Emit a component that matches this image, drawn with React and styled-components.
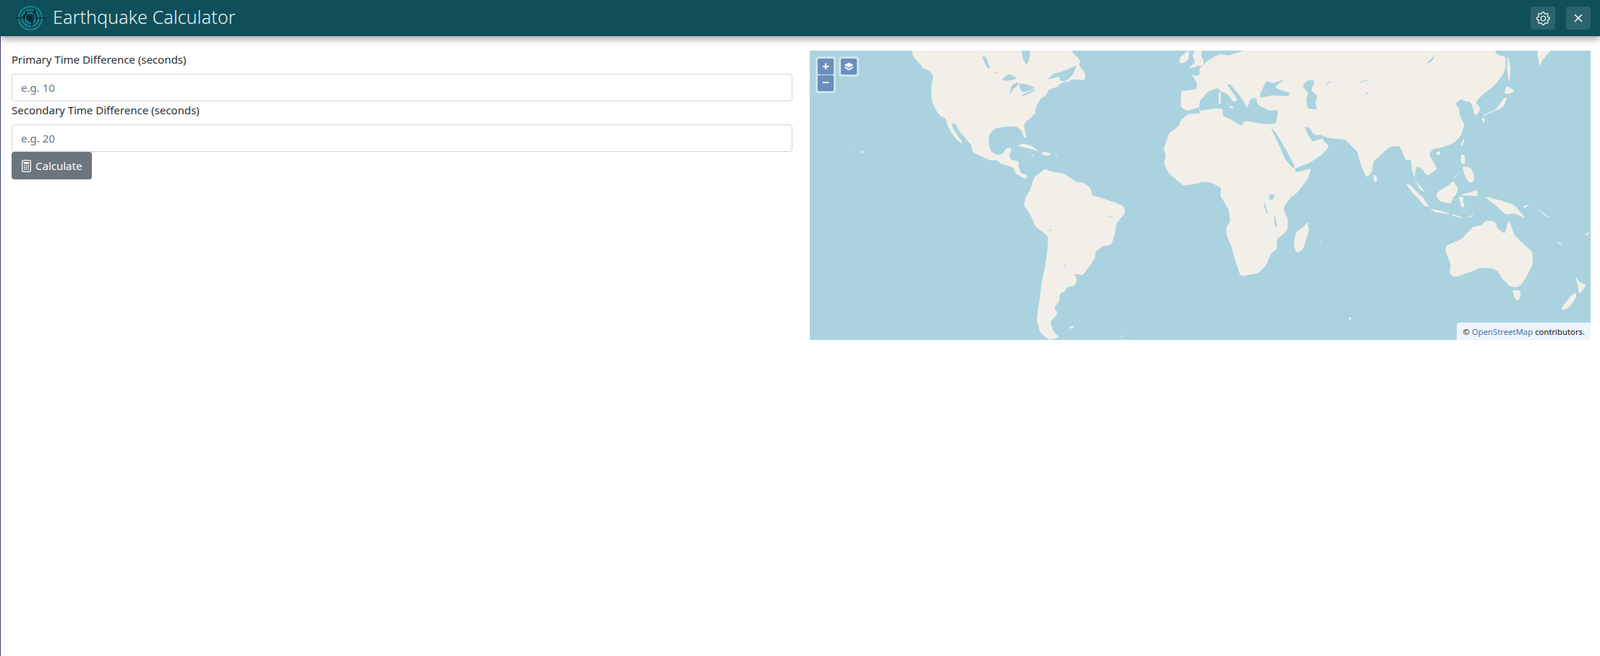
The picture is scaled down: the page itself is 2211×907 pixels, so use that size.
import React from "react";
import styled, { createGlobalStyle } from "styled-components";
import { BsGear } from "react-icons/bs";
import { X } from "lucide-react";

const GlobalStyle = createGlobalStyle`
  html, body {
    margin: 0;
    background: #fff;
  }
  * {
    box-sizing: border-box;
  }
`;

const FONT = `"Noto Sans", "Open Sans", sans-serif`;

// map traced in four 540x200 tiles, points are in tile pixels at 2.9 x 3 zoom
const TILES = [
  {
    x: 0,
    y: 0,
    land: [
      "408,-3 415,25 432,45 447,60 452,72 480,85 497,103 490,130 487,175 490,210 505,245 522,270 545,282 552,310 570,345 595,375 612,388 610,375 585,340 567,305 583,300 600,335 630,370 650,395 652,420 690,440 730,457 745,452 770,470 805,480 820,490 825,510 850,525 868,533 875,517 850,510 838,490 838,458 810,455 800,440 810,402 785,405 775,430 745,432 725,415 717,385 720,345 745,322 790,315 830,315 848,330 860,362 870,362 862,330 860,300 880,285 905,262 905,240 925,200 950,185 955,165 990,150 1040,130 1045,120 1105,122 1105,95 1080,60 1085,40 1060,15 1050,-3",
      "870,603 885,575 900,525 925,505 945,490 960,500 1020,510 1070,545 1100,548 1125,570 1135,603",
      "832,395 855,385 890,395 920,418 885,408 845,397",
      "925,425 945,418 972,432 940,436",
      "887,432 902,433 900,437 888,436",
      "983,432 996,433 995,436 984,436",
      "175,395 182,397 180,400",
      "205,415 216,418 214,426 208,424",
      "1480,52 1487,25 1505,12 1520,-3 1522,30 1505,50",
      "1572,-3 1542,-3 1535,25 1548,45 1520,75 1572,60",
      "1572,100 1545,105 1530,98 1555,135 1550,160 1490,168 1488,235 1515,250 1572,232",
      "1572,262 1520,262 1490,285 1480,312 1440,345 1420,405 1428,440 1420,465 1440,510 1500,560 1572,548"
    ],
    water: [
      "850,-3 885,-3 880,40 870,60 855,35",
      "690,25 705,22 725,75 712,72",
      "768,122 800,95 832,115 800,125",
      "802,186 808,145 835,128 835,145 815,160",
      "835,135 870,140 905,155 870,170 850,170",
      "845,188 900,160 905,165 860,188",
      "952,120 978,95 1010,88 1072,60 1055,98 1035,122 1015,128 1003,122 1000,108 975,115",
      "990,160 1040,125 1005,135",
      "740,90 750,85 748,95"
    ]
  },
  {
    x: 540,
    y: 0,
    land: [
      "-3,72 40,35 75,15 115,20 185,-3 1180,-3 1195,20 1225,25 1225,70 1215,100 1180,145 1130,185 1105,215 1125,240 1115,262 1100,268 1095,240 1085,212 1060,210 1050,198 1022,222 1040,240 1040,265 1060,310 1045,355 1015,385 960,405 935,405 918,430 950,490 910,520 890,490 868,478 858,530 905,590 880,575 850,500 845,450 825,455 800,395 760,400 695,460 690,500 670,527 650,490 630,420 620,408 580,368 510,362 490,350 490,370 518,395 490,430 440,465 378,490 445,490 430,535 400,575 375,603 80,603 85,570 40,545 -3,545",
      "-3,30 12,32 14,60 -3,65",
      "825,550 840,555 885,603 860,603",
      "945,603 955,585 1000,555 1015,540 1035,572 1025,603",
      "1352,-3 1408,-3 1380,30 1360,65",
      "1235,20 1245,70 1240,130 1235,115 1230,60",
      "1228,145 1262,165 1240,180 1220,180",
      "1130,275 1160,260 1215,235 1232,195 1220,195 1185,245 1140,265",
      "1128,280 1143,278 1138,305",
      "1045,392 1055,365 1060,370 1052,397",
      "945,425 960,415 964,430 950,433",
      "693,515 705,515 711,540 698,546",
      "1045,432 1062,432 1062,470 1047,470",
      "1052,480 1085,485 1100,520 1095,548 1075,545 1060,515",
      "1020,525 1040,500 1022,530",
      "1040,600 1090,585 1110,575 1115,603"
    ],
    water: [
      "-3,212 30,170 70,155 85,170 110,180 135,215 150,205 108,140 120,138 165,195 190,240 200,200 225,195 230,225 280,250 312,245 305,303 255,305 180,290 165,312 130,290 90,270 90,240 60,240 -3,250",
      "240,180 265,125 290,135 340,120 310,140 300,155 360,175 355,190 290,185 240,195",
      "410,145 435,120 460,125 445,165 472,190 460,215 470,245 430,240 425,200 435,180",
      "282,318 300,335 330,385 375,470 378,490 365,480 340,450 320,400",
      "378,490 440,468 470,482 445,490 385,505",
      "418,315 440,320 455,350 490,350 490,365 450,378 430,345",
      "905,55 945,15 952,-3 930,45",
      "638,140 645,125 690,123 645,130",
      "505,155 510,130 530,125 512,135",
      "660,175 680,175 670,181"
    ],
    island: [
      "75,172 83,172 82,222 74,222",
      "110,235 130,228 133,240"
    ]
  },
  {
    x: 0,
    y: 200,
    land: [
      "870,-3 862,20 860,45 885,80 905,130 955,168 955,210 945,290 930,360 925,410 915,475 910,520 925,570 960,600 1000,590 975,560 965,525 995,490 980,465 1000,440 1005,405 1025,400 1030,380 1065,375 1072,350 1060,325 1095,332 1125,290 1145,260 1145,235 1175,212 1210,205 1225,160 1230,115 1265,75 1260,45 1220,28 1150,5 1120,-3",
      "1040,545 1062,542 1055,553 1040,553",
      "1240,580 1250,582 1255,592"
    ],
    water: [
      "958,140 968,142 966,150",
      "1016,288 1027,288 1022,294",
      "1198,88 1212,84 1205,92"
    ]
  },
  {
    x: 540,
    y: 200,
    land: [
      "78,-3 115,60 120,110 105,130 105,165 125,210 140,270 160,330 175,335 235,322 265,290 285,240 305,225 310,205 305,185 350,145 352,100 335,60 340,40 372,-3",
      "430,110 437,145 410,230 385,238 375,205 383,155 420,125",
      "860,-3 885,-3 920,50 900,45",
      "945,-3 1020,-3 1005,35 960,25",
      "918,55 970,65 1005,80 945,70",
      "1010,78 1050,90 1048,95 1012,84",
      "1070,95 1100,75 1085,92",
      "1035,5 1060,8 1052,20 1062,48 1048,50 1042,25",
      "1140,5 1200,20 1260,40 1305,95 1260,75 1225,80 1195,50 1165,25",
      "1295,45 1325,38 1300,55",
      "985,210 1050,180 1095,130 1130,125 1145,105 1185,110 1190,135 1222,160 1238,100 1260,165 1300,205 1332,235 1335,285 1305,345 1280,380 1245,380 1210,345 1195,315 1175,305 1125,300 1080,320 1020,340 1000,325 1005,285 985,235",
      "1252,392 1285,395 1285,420 1275,437 1262,430",
      "1448,470 1480,425 1505,402 1510,420 1485,460 1458,478",
      "1505,335 1525,365 1550,370 1530,400 1520,410 1515,375",
      "1428,185 1450,205 1445,208",
      "1345,50 1405,95 1390,90",
      "1542,165 1560,150 1558,165",
      "596,505 610,510 598,517",
      "480,192 490,192 485,198"
    ],
    water: [
      "275,-3 302,-3 290,20 278,18",
      "253,30 258,30 272,78 266,78",
      "295,85 302,88 308,135 300,130"
    ]
  }
];

// rounds each corner a little so coasts don't look like straight cuts
const smoothPath = (points) => {
  const pts = points.split(" ").map((p) => p.split(",").map(Number));
  const n = pts.length;
  const towards = (a, b) => {
    const len = Math.hypot(b[0] - a[0], b[1] - a[1]) || 1;
    const cut = Math.min(len * 0.4, 9);
    return [a[0] + ((b[0] - a[0]) * cut) / len, a[1] + ((b[1] - a[1]) * cut) / len];
  };
  let d = "";
  pts.forEach((p, i) => {
    const from = towards(p, pts[(i + n - 1) % n]);
    const to = towards(p, pts[(i + 1) % n]);
    d += `${i === 0 ? "M" : "L"}${from[0]} ${from[1]}Q${p[0]} ${p[1]} ${to[0]} ${to[1]}`;
  });
  return d + "Z";
};

const App = () => {
  return (
    <Page>
      <GlobalStyle />
      <TopBar>
        <Brand>
          <Logo viewBox="0 0 44 36">
            <circle cx="22" cy="18" r="16" />
            <circle cx="22" cy="18" r="11.5" />
            <circle cx="22" cy="18" r="7" />
            <polyline points="1,18 11,18 13,14 14,20 16,8 18,21 20,12 21,24 23,13 24,30 26,14 28,6 30,20 32,18 43,18" />
          </Logo>
          <Title>Earthquake Calculator</Title>
        </Brand>
        <BarActions>
          <BarButton aria-label="Settings"><BsGear size={19} /></BarButton>
          <BarButton aria-label="Close"><X size={18} strokeWidth={2} /></BarButton>
        </BarActions>
      </TopBar>

      <Content>
        <FormColumn>
          <Field>
            <FieldLabel htmlFor="primary">Primary Time Difference (seconds)</FieldLabel>
            <FieldInput id="primary" placeholder="e.g. 10" />
          </Field>
          <Field>
            <FieldLabel htmlFor="secondary">Secondary Time Difference (seconds)</FieldLabel>
            <FieldInput id="secondary" placeholder="e.g. 20" />
          </Field>
          <CalcButton type="button">
            <svg width="13" height="17" viewBox="0 0 13 17" fill="none" stroke="currentColor">
              <rect x="0.7" y="0.7" width="11.6" height="15.6" rx="1.5" strokeWidth="1.3" />
              <rect x="2.8" y="3" width="7.4" height="2.6" fill="currentColor" stroke="none" />
              <path d="M3 8h1.6M5.7 8h1.6M8.4 8H10M3 10.5h1.6M5.7 10.5h1.6M8.4 10.5H10M3 13h1.6M5.7 13h1.6M8.4 13H10" strokeWidth="1.5" />
            </svg>
            Calculate
          </CalcButton>
        </FormColumn>

        <MapBox>
          <MapDrawing viewBox="0 0 1080 400" preserveAspectRatio="none">
            {TILES.map((tile) => (
              <g key={`${tile.x}-${tile.y}`} transform={`translate(${tile.x} ${tile.y}) scale(${1 / 2.9} ${1 / 3})`}>
                {tile.land.map((points) => <Land key={points} d={smoothPath(points)} />)}
                {tile.water.map((points) => <Water key={points} d={smoothPath(points)} />)}
                {(tile.island || []).map((points) => <Land key={points} d={smoothPath(points)} />)}
              </g>
            ))}
          </MapDrawing>

          <ZoomControl>
            <MapButton aria-label="Zoom in">+</MapButton>
            <MapButton aria-label="Zoom out">−</MapButton>
          </ZoomControl>
          <LayerControl>
            <MapButton aria-label="Layers">
              <svg width="14" height="13" viewBox="0 0 14 13" fill="#fff">
                <path d="M7 0.5 13.5 4 7 7.5 0.5 4Z" />
                <path d="M2.2 6.6 7 9.2l4.8-2.6 1.7 1L7 11.5.5 7.6Z" />
              </svg>
            </MapButton>
          </LayerControl>
          <Attribution>
            © <AttributionLink href="#osm">OpenStreetMap</AttributionLink> contributors.
          </Attribution>
        </MapBox>
      </Content>
    </Page>
  );
};

export default App;

const Page = styled.div`
  min-height: 907px;
  border-left: 1px solid #3c4274;
  font-family: ${FONT};
  color: #2b2f33;
`;

const TopBar = styled.header`
  position: relative;
  z-index: 2;
  height: 50px;
  margin-left: -1px;
  padding: 0 13px 0 20px;
  display: flex;
  align-items: center;
  justify-content: space-between;
  background: #0f4f5a;
  box-shadow: 0 4px 9px rgba(0, 0, 0, 0.35);
`;

const Brand = styled.div`
  display: flex;
  align-items: center;
  gap: 9px;
`;

const Logo = styled.svg`
  width: 44px;
  height: 36px;
  fill: none;

  circle {
    stroke: #1a929e;
    stroke-width: 1.6;
  }

  polyline {
    stroke: #05191d;
    stroke-width: 1.1;
  }
`;

const Title = styled.h1`
  margin: 0 0 5px;
  font-size: 25px;
  font-weight: 300;
  letter-spacing: 0.1px;
  color: #e6f1f1;
`;

const BarActions = styled.div`
  display: flex;
  gap: 15px;
`;

const BarButton = styled.button`
  width: 34px;
  height: 32px;
  padding: 0;
  display: flex;
  align-items: center;
  justify-content: center;
  border: 0;
  border-radius: 4px;
  color: #fff;
  background: rgba(255, 255, 255, 0.12);
`;

const Content = styled.main`
  display: grid;
  grid-template-columns: 1fr 1fr;
  column-gap: 24px;
  padding: 20px 13px 0 15px;
`;

const FormColumn = styled.section`
  display: flex;
  flex-direction: column;
  align-items: flex-start;
`;

const Field = styled.div`
  width: 100%;
`;

const FieldLabel = styled.label`
  display: block;
  margin-bottom: 8px;
  font-size: 15px;
  line-height: 24px;
`;

const FieldInput = styled.input`
  display: block;
  width: 100%;
  height: 38px;
  padding: 6px 12px;
  border: 1px solid #ced4da;
  border-radius: 4px;
  font-family: ${FONT};
  font-size: 15px;
  color: #495057;

  &::placeholder {
    color: #6c757d;
  }
`;

const CalcButton = styled.button`
  height: 38px;
  padding: 0 14px;
  display: flex;
  align-items: center;
  gap: 6px;
  border: 0;
  border-radius: 4px;
  font-family: ${FONT};
  font-size: 15px;
  color: #fff;
  background: #6c757d;
`;

const MapBox = styled.section`
  position: relative;
  height: 400px;
  overflow: hidden;
  background: #aad3df;
`;

const MapDrawing = styled.svg`
  display: block;
  width: 100%;
  height: 100%;
`;

const Land = styled.path`
  fill: #f2efe9;
`;

const Water = styled.path`
  fill: #aad3df;
`;

const OverlayControl = styled.div`
  position: absolute;
  top: 8px;
  padding: 3px;
  border-radius: 4px;
  background: rgba(255, 255, 255, 0.4);
`;

const ZoomControl = styled(OverlayControl)`
  left: 8px;
  display: flex;
  flex-direction: column;
  gap: 1px;
`;

const LayerControl = styled(OverlayControl)`
  left: 40px;
`;

const MapButton = styled.button`
  width: 22px;
  height: 22px;
  padding: 0;
  display: flex;
  align-items: center;
  justify-content: center;
  border: 0;
  border-radius: 2px;
  font-family: "Liberation Sans", sans-serif;
  font-size: 17px;
  font-weight: 700;
  color: #fff;
  background: #6a8fbb;
`;

const Attribution = styled.div`
  position: absolute;
  right: 0;
  bottom: 0;
  height: 24px;
  padding: 0 8px 0 9px;
  display: flex;
  align-items: center;
  gap: 3px;
  border-top-left-radius: 4px;
  font-size: 11.3px;
  color: #111;
  background: #eef5f8;
`;

const AttributionLink = styled.a`
  color: #4a76b0;
  text-decoration: none;
`;
